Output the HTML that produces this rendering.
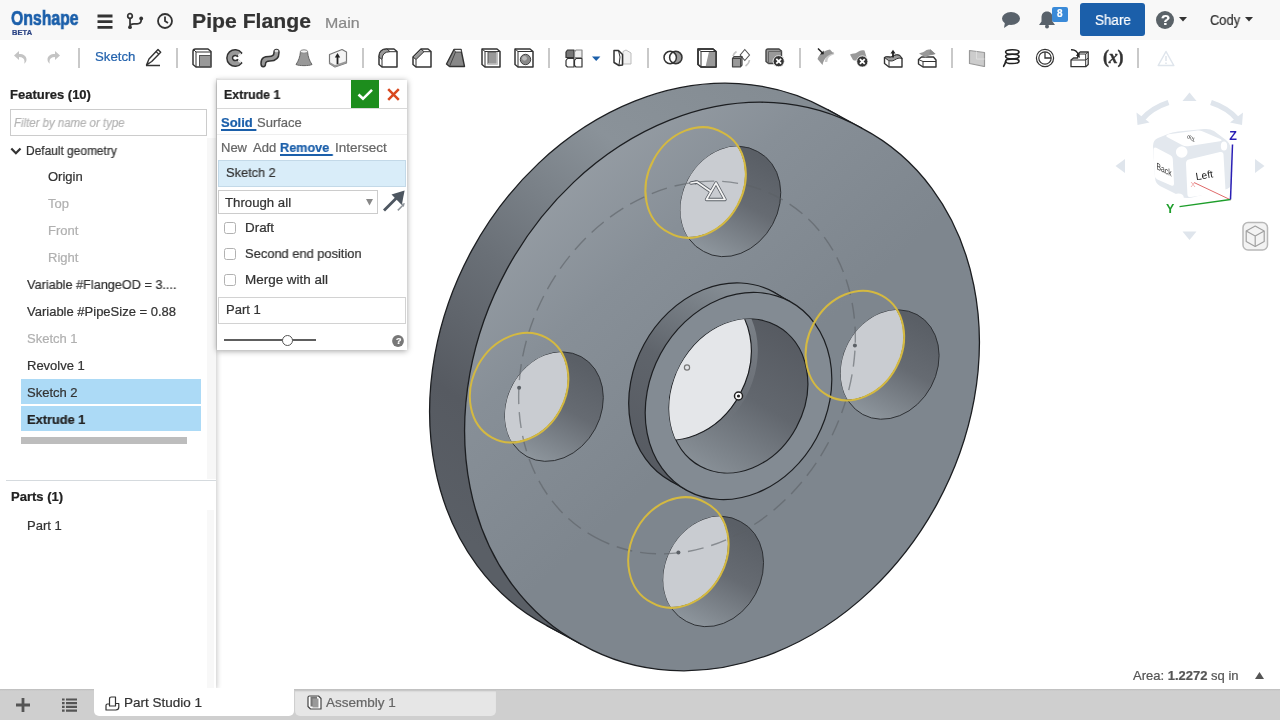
<!DOCTYPE html>
<html lang="en"><head><meta charset="utf-8"><title>Pipe Flange</title>
<style>
*{box-sizing:border-box;margin:0;padding:0}
html,body{width:1280px;height:720px;overflow:hidden;background:#fff;font-family:"Liberation Sans",sans-serif;color:#333}
.abs{position:absolute}
#hdr{position:absolute;left:0;top:0;width:1280px;height:40px;background:#f8f8f8}
#tb{position:absolute;left:0;top:40px;width:1280px;height:38px;background:#fff}
.t{position:absolute;white-space:nowrap;line-height:1;transform-origin:0 0;will-change:transform;-webkit-text-stroke:.22px}
#model{position:absolute;left:0;top:0}
#left{position:absolute;left:0;top:78px;width:216px;height:611px;background:#fff;box-shadow:1px 0 5px rgba(0,0,0,.22);clip-path:inset(0 -12px 0 0)}
#lstrip{position:absolute;left:206px;top:0;width:10px;height:611px;background:#f7f7f7}
#dlg{position:absolute;left:217px;top:80px;width:190px;height:270px;background:#fff;box-shadow:0 1px 6px rgba(0,0,0,.38)}
#bot{position:absolute;left:0;top:689px;width:1280px;height:31px;background:#cfcfcf}
.sep{position:absolute;top:46px;width:2px;height:22px;background:#c4c4c4}
.row{position:absolute;left:21px;width:180px;height:24px;background:#acdaf6}
.cb{position:absolute;left:7.200px;width:11.500px;height:11.500px;border:1px solid #b2b2b2;border-radius:2.500px;background:#fff}
</style></head><body>
<svg id="model" width="1280" height="720" viewBox="0 0 1280 720">
<defs>
<linearGradient id="gRim" gradientUnits="userSpaceOnUse" x1="760" y1="80" x2="440" y2="520">
<stop offset="0" stop-color="#848c93"/><stop offset="0.25" stop-color="#8a9299"/><stop offset="0.55" stop-color="#6a7077"/><stop offset="0.8" stop-color="#565a61"/><stop offset="1" stop-color="#5a5f66"/></linearGradient>
<linearGradient id="gFace" gradientUnits="userSpaceOnUse" x1="510" y1="190" x2="720" y2="420">
<stop offset="0" stop-color="#989fa6"/><stop offset="0.45" stop-color="#878f97"/><stop offset="1" stop-color="#7e868e"/></linearGradient>
<linearGradient id="gHubSide" gradientUnits="userSpaceOnUse" x1="730" y1="290" x2="640" y2="470">
<stop offset="0" stop-color="#848c93"/><stop offset="0.45" stop-color="#5f646b"/><stop offset="1" stop-color="#565a61"/></linearGradient>
<linearGradient id="gBand" gradientUnits="userSpaceOnUse" x1="750" y1="320" x2="730" y2="430"><stop offset="0" stop-color="#7b8188"/><stop offset="0.6" stop-color="#70757c" stop-opacity="0.8"/><stop offset="1" stop-color="#70757c" stop-opacity="0"/></linearGradient>
<linearGradient id="gBore" gradientUnits="userSpaceOnUse" x1="790" y1="330" x2="700" y2="480">
<stop offset="0" stop-color="#565a61"/><stop offset="0.45" stop-color="#62676e"/><stop offset="1" stop-color="#8d959c"/></linearGradient>

<linearGradient id="gH0" gradientUnits="userSpaceOnUse" x1="766" y1="161" x2="716" y2="256"><stop offset="0" stop-color="#5a5f66"/><stop offset="0.45" stop-color="#666b72"/><stop offset="1" stop-color="#8d959c"/></linearGradient>
<clipPath id="cH0"><path d="M703.5,251.4 A56.8,46.7 118.5 1 0 757.7,151.6 A56.8,46.7 118.5 1 0 703.5,251.4 Z" /></clipPath>
<linearGradient id="gH1" gradientUnits="userSpaceOnUse" x1="925" y1="325" x2="875" y2="420"><stop offset="0" stop-color="#5a5f66"/><stop offset="0.45" stop-color="#666b72"/><stop offset="1" stop-color="#8d959c"/></linearGradient>
<clipPath id="cH1"><path d="M862.8,414.5 A56.8,46.7 118.5 1 0 917.0,314.6 A56.8,46.7 118.5 1 0 862.8,414.5 Z" /></clipPath>
<linearGradient id="gH2" gradientUnits="userSpaceOnUse" x1="748" y1="532" x2="698" y2="627"><stop offset="0" stop-color="#5a5f66"/><stop offset="0.45" stop-color="#666b72"/><stop offset="1" stop-color="#8d959c"/></linearGradient>
<clipPath id="cH2"><path d="M686.3,621.4 A56.8,46.7 118.5 1 0 740.5,521.6 A56.8,46.7 118.5 1 0 686.3,621.4 Z" /></clipPath>
<linearGradient id="gH3" gradientUnits="userSpaceOnUse" x1="589" y1="367" x2="539" y2="462"><stop offset="0" stop-color="#5a5f66"/><stop offset="0.45" stop-color="#666b72"/><stop offset="1" stop-color="#8d959c"/></linearGradient>
<clipPath id="cH3"><path d="M527.0,456.6 A56.8,46.7 118.5 1 0 581.2,356.7 A56.8,46.7 118.5 1 0 527.0,456.6 Z" /></clipPath>
<clipPath id="cBore"><path d="M700.3,466.3 A80.0,65.8 118.5 1 0 776.7,325.7 A80.0,65.8 118.5 1 0 700.3,466.3 Z" /></clipPath>
<clipPath id="cFace"><path d="M581.9,644.6 A293.7,241.7 118.5 1 0 862.1,128.4 A293.7,241.7 118.5 1 0 581.9,644.6 Z" /></clipPath>
</defs>
<g stroke="#1c1e21" stroke-width="1.3" stroke-linejoin="round">
<path d="M546.9,625.6 A293.7,241.7 118.5 1 0 827.1,109.4 A293.7,241.7 118.5 1 0 546.9,625.6 Z" fill="url(#gRim)"/>
<path d="M546.9,625.6 L581.9,644.6 L862.1,128.4 L827.1,109.4 Z" fill="url(#gRim)" stroke="none"/>
<path d="M546.9,625.6 L581.9,644.6 M827.1,109.4 L862.1,128.4" fill="none"/>
<path d="M581.9,644.6 A293.7,241.7 118.5 1 0 862.1,128.4 A293.7,241.7 118.5 1 0 581.9,644.6 Z" fill="url(#gFace)"/>
</g>
<g stroke="#1c1e21" stroke-width="1.2">
<path d="M670.7,481.1 A107.6,88.6 118.5 1 0 773.3,291.9 A107.6,88.6 118.5 1 0 670.7,481.1 Z" fill="url(#gHubSide)"/>
<path d="M670.7,481.1 L687.2,490.6 L789.8,301.4 L773.3,291.9 Z" fill="url(#gHubSide)" stroke="none"/>
<path d="M670.7,481.1 L687.2,490.6 M773.3,291.9 L789.8,301.4" fill="none"/>
<path d="M687.2,490.6 A107.6,88.6 118.5 1 0 789.8,301.4 A107.6,88.6 118.5 1 0 687.2,490.6 Z" fill="#838b93"/>
<path d="M700.3,466.3 A80.0,65.8 118.5 1 0 776.7,325.7 A80.0,65.8 118.5 1 0 700.3,466.3 Z" fill="url(#gBore)"/>
</g>
<g clip-path="url(#cBore)"><path d="M641.2,438.1 A85.5,70.4 118.5 1 0 722.8,287.9 A85.5,70.4 118.5 1 0 641.2,438.1 Z" fill="url(#gBand)"/><path d="M643.8,433.3 A80.0,65.8 118.5 1 0 720.2,292.7 A80.0,65.8 118.5 1 0 643.8,433.3 Z" fill="#e4e6e9" stroke="#1c1e21" stroke-width="1.2"/></g>
<path d="M703.5,251.4 A56.8,46.7 118.5 1 0 757.7,151.6 A56.8,46.7 118.5 1 0 703.5,251.4 Z" fill="url(#gH0)" stroke="#2e3135" stroke-width="1"/>
<g clip-path="url(#cH0)"><path d="M668.5,232.4 A56.8,46.7 118.5 1 0 722.7,132.6 A56.8,46.7 118.5 1 0 668.5,232.4 Z" fill="#c9ccd1" stroke="#33363a" stroke-width="1"/></g>
<path d="M862.8,414.5 A56.8,46.7 118.5 1 0 917.0,314.6 A56.8,46.7 118.5 1 0 862.8,414.5 Z" fill="url(#gH1)" stroke="#2e3135" stroke-width="1"/>
<g clip-path="url(#cH1)"><path d="M827.8,395.5 A56.8,46.7 118.5 1 0 882.0,295.6 A56.8,46.7 118.5 1 0 827.8,395.5 Z" fill="#c9ccd1" stroke="#33363a" stroke-width="1"/></g>
<path d="M686.3,621.4 A56.8,46.7 118.5 1 0 740.5,521.6 A56.8,46.7 118.5 1 0 686.3,621.4 Z" fill="url(#gH2)" stroke="#2e3135" stroke-width="1"/>
<g clip-path="url(#cH2)"><path d="M651.3,602.4 A56.8,46.7 118.5 1 0 705.5,502.6 A56.8,46.7 118.5 1 0 651.3,602.4 Z" fill="#c9ccd1" stroke="#33363a" stroke-width="1"/></g>
<path d="M527.0,456.6 A56.8,46.7 118.5 1 0 581.2,356.7 A56.8,46.7 118.5 1 0 527.0,456.6 Z" fill="url(#gH3)" stroke="#2e3135" stroke-width="1"/>
<g clip-path="url(#cH3)"><path d="M492.0,437.6 A56.8,46.7 118.5 1 0 546.2,337.7 A56.8,46.7 118.5 1 0 492.0,437.6 Z" fill="#c9ccd1" stroke="#33363a" stroke-width="1"/></g>
<path d="M594.9,537.1 A193.0,158.8 118.5 1 0 779.1,197.9 A193.0,158.8 118.5 1 0 594.9,537.1 Z" fill="none" stroke="#5b6066" stroke-width="1.4" stroke-dasharray="16 8" opacity="0.6"/>
<path d="M668.5,232.4 A56.8,46.7 118.5 1 0 722.7,132.6 A56.8,46.7 118.5 1 0 668.5,232.4 Z" fill="none" stroke="#d4b941" stroke-width="2"/>
<circle cx="695.6" cy="182.5" r="2" fill="#5b6066"/>
<path d="M827.8,395.5 A56.8,46.7 118.5 1 0 882.0,295.6 A56.8,46.7 118.5 1 0 827.8,395.5 Z" fill="none" stroke="#d4b941" stroke-width="2"/>
<circle cx="854.9" cy="345.5" r="2" fill="#5b6066"/>
<path d="M651.3,602.4 A56.8,46.7 118.5 1 0 705.5,502.6 A56.8,46.7 118.5 1 0 651.3,602.4 Z" fill="none" stroke="#d4b941" stroke-width="2"/>
<circle cx="678.4" cy="552.5" r="2" fill="#5b6066"/>
<path d="M492.0,437.6 A56.8,46.7 118.5 1 0 546.2,337.7 A56.8,46.7 118.5 1 0 492.0,437.6 Z" fill="none" stroke="#d4b941" stroke-width="2"/>
<circle cx="519.1" cy="387.7" r="2" fill="#5b6066"/>
<circle cx="687.0" cy="367.5" r="2.6" fill="#e4e6e9" stroke="#777" stroke-width="1.2"/>
<circle cx="738.5" cy="396.0" r="4" fill="#fff" stroke="#222" stroke-width="1.5"/><circle cx="738.5" cy="396.0" r="1.6" fill="#222"/>
<g fill="none" stroke-linejoin="round" stroke-linecap="round"><path d="M691,183 L697,182 L710,191 M716,183 L725,199.500 H706.500 Z" stroke="#5a5f66" stroke-width="3.400"/><path d="M691,183 L697,182 L710,191 M716,183 L725,199.500 H706.500 Z" stroke="#f4f4f4" stroke-width="1.700"/></g>
</svg>
<div id="hdr">
 <div class="t" style="left:11px;top:9px;font-size:19.500px;font-weight:bold;color:#1b5faa;-webkit-text-stroke:.7px #1b5faa;transform:scaleX(.81)">Onshape</div>
 <div class="t" style="left:12px;top:28.600px;font-size:7.500px;font-weight:bold;color:#2d4585;letter-spacing:.1px">BETA</div>
 <svg class="abs" style="left:97px;top:13.500px" width="16" height="16"><path d="M.5 2h15M.5 7.700h15M.5 13.400h15" stroke="#333" stroke-width="2.800"/></svg>
 <svg class="abs" style="left:126px;top:11px" width="18" height="19" fill="none" stroke="#333" stroke-width="1.700"><circle cx="4" cy="5" r="2.300"/><circle cx="4" cy="16.200" r="1.900" fill="#333" stroke="none"/><circle cx="15.200" cy="7.500" r="1.900" fill="#333" stroke="none"/><path d="M4 7.500v8M15.200 7.500v1.500q0 3.800-4 3.800H8q-4 0-4 3"/></svg>
 <svg class="abs" style="left:156px;top:11.800px" width="18" height="18" fill="none" stroke="#333" stroke-width="1.8"><circle cx="9" cy="9" r="7"/><path d="M9 4.5V9l3 2"/></svg>
 <div class="t" style="left:192px;top:10.900px;font-size:20px;font-weight:bold;color:#333;transform:scaleX(1.06)">Pipe Flange</div>
 <div class="t" style="left:325px;top:15.500px;font-size:14.500px;color:#888;transform:scaleX(1.1)">Main</div>
 <svg class="abs" style="left:1001px;top:11px" width="20" height="18"><ellipse cx="10" cy="7.5" rx="9" ry="6.5" fill="#59626b"/><path d="M4 11l-1 6 6-4z" fill="#59626b"/></svg>
 <svg class="abs" style="left:1037px;top:10px" width="20" height="20"><path d="M10 1.5c-3.6 0-5.5 2.6-5.5 6v4L2 15h16l-2.500-3.500v-4c0-3.400-1.900-6-5.500-6z" fill="#59626b"/><circle cx="10" cy="16.500" r="2" fill="#59626b"/></svg>
 <div class="abs" style="left:1052px;top:7px;width:16px;height:15px;background:#3a8ad8;border-radius:2px"></div>
 <div class="t" style="left:1057px;top:9px;font-size:10px;font-weight:bold;color:#fff">8</div>
 <div class="abs" style="left:1080px;top:3px;width:65px;height:33px;background:#1b5faa;border-radius:3px"></div>
 <div class="t" style="left:1094.500px;top:13px;font-size:14px;color:#fff;transform:scaleX(.96)">Share</div>
 <svg class="abs" style="left:1155px;top:10px" width="20" height="20"><circle cx="10" cy="10" r="9" fill="#5a6268"/></svg>
 <div class="t" style="left:1160.500px;top:12px;font-size:15px;font-weight:bold;color:#fff">?</div>
 <svg class="abs" style="left:1179px;top:17px" width="9" height="6"><path d="M0 0h8L4 4.500z" fill="#333"/></svg>
 <div class="t" style="left:1210px;top:13px;font-size:14px;color:#333;transform:scaleX(.92)">Cody</div>
 <svg class="abs" style="left:1244.500px;top:17px" width="9" height="6"><path d="M0 0h8L4 4.500z" fill="#333"/></svg>
</div>
<div id="tb">
<svg class="abs" style="left:13px;top:10px" width="15" height="15" viewBox="0 0 15 15" ><path d="M6 1L1 5.5l5 4.500V7c3.500 0 5.500 1.500 5.500 4.500 0 .8-.2 1.500-.5 2.200C13 12.500 13.500 11 13.500 9.500 13.500 6 10.500 4 6 4z" fill="#c4c4c4"/></svg>
<svg class="abs" style="left:46px;top:10px" width="15" height="15" viewBox="0 0 15 15" ><path transform="translate(15,0) scale(-1,1)" d="M6 1L1 5.5l5 4.500V7c3.500 0 5.500 1.500 5.500 4.500 0 .8-.2 1.500-.5 2.200C13 12.500 13.500 11 13.500 9.500 13.500 6 10.500 4 6 4z" fill="#c4c4c4"/></svg>
<div class="abs" style="left:78px;top:8px;width:2px;height:20px;background:#c9c9c9"></div>
<div class="t" style="left:95px;top:10px;font-size:13.200px;color:#2463ad">Sketch</div>
<svg class="abs" style="left:143px;top:7px" width="20" height="20" viewBox="0 0 20 20" ><path d="M3 18.500h14" stroke="#333" stroke-width="1.500"/><path d="M3.500 18l2.500-6L15 2.500l2.700 2.700L8.700 14.500z" fill="#fff" stroke="#333" stroke-width="1.400" stroke-linejoin="round"/><path d="M13 4.500l2.700 2.700" stroke="#333" stroke-width="1.200"/><path d="M3.500 18l1.200-3 1.800 1.800z" fill="#333"/></svg>
<div class="abs" style="left:176px;top:8px;width:2px;height:20px;background:#c9c9c9"></div>
<svg class="abs" style="left:192px;top:8px" width="20" height="20" viewBox="0 0 20 20" ><path d="M1 3.500Q1 1 3.500 1H16l3 2.500V19H4L1 16.500z" fill="#fff" stroke="#333" stroke-width="1.500" stroke-linejoin="round"/><path d="M4 4h15" stroke="#333" stroke-width="1"/><path d="M4 4v15" stroke="#333" stroke-width="1"/><path d="M1.500 1.500L4 4" stroke="#333" stroke-width="1"/><rect x="7.500" y="7.500" width="11" height="11" fill="#999" stroke="#555" stroke-width="1"/></svg>
<svg class="abs" style="left:226px;top:8px" width="19" height="20" viewBox="0 0 19 20" ><path d="M15.7 4.9A8.3 8.3 0 1 0 15.7 15.1L11.2 11.6A2.6 2.6 0 1 1 11.2 8.4Z" fill="#999" stroke="#333" stroke-width="1.500" stroke-linejoin="round"/><ellipse cx="13.5" cy="6.6" rx="1.900" ry="1" transform="rotate(-38 13.5 6.6)" fill="#eee"/><ellipse cx="13.5" cy="13.4" rx="1.900" ry="1" transform="rotate(38 13.5 13.4)" fill="#eee"/></svg>
<svg class="abs" style="left:259px;top:8px" width="21" height="20" viewBox="0 0 21 20" ><path d="M2 15.500C2 9 6 8.500 10 8.500c3.500 0 5-1 5-4 0-2 .8-3 2.500-3S20 2.500 20 4.500c0 6-4 8.500-9 8.500-3 0-4.500.5-4.500 3 0 1.800-1 2.700-2.300 2.700S2 17.500 2 15.500z" fill="#999" stroke="#333" stroke-width="1.500"/><ellipse cx="17.500" cy="3" rx="2" ry="1.200" fill="#ddd"/></svg>
<svg class="abs" style="left:294px;top:8px" width="20" height="20" viewBox="0 0 20 20" ><path d="M6.500 3.500C6 9 4.500 13 2 16.500c3 1.500 13 1.500 16 0C15.500 13 14 9 13.500 3.500z" fill="#999" stroke="#666" stroke-width="1"/><ellipse cx="10" cy="3.500" rx="3.600" ry="1.700" fill="#f4f4f4" stroke="#888" stroke-width="1"/></svg>
<svg class="abs" style="left:328px;top:8px" width="20" height="20" viewBox="0 0 20 20" ><path d="M1.500 6.500L14 1.500l4.500 2.500v11L7 19l-5.500-3.500z" fill="#f4f4f4" stroke="#777" stroke-width="1.200" stroke-linejoin="round"/><path d="M1.500 14l5.500 3 11.500-4v2L7 19l-5.500-3z" fill="#999"/><path d="M9.500 16V8" stroke="#222" stroke-width="1.800"/><path d="M6.800 9.500L9.500 5l2.700 4.500z" fill="#222"/></svg>
<div class="abs" style="left:362px;top:8px;width:2px;height:20px;background:#c9c9c9"></div>
<svg class="abs" style="left:378px;top:8px" width="20" height="20" viewBox="0 0 20 20" ><path d="M1 9Q1 1 9 1h7l3 2.500V19H4L1 16.500z" fill="#fff" stroke="#333" stroke-width="1.500" stroke-linejoin="round"/><path d="M1 9Q1 1 9 1l3 2.700Q4 3.700 4 11.500z" fill="#999" stroke="#333" stroke-width="1"/><path d="M12 3.700h7M4 11.500V19" stroke="#333" stroke-width="1" fill="none"/></svg>
<svg class="abs" style="left:412px;top:8px" width="20" height="20" viewBox="0 0 20 20" ><path d="M1 9L9 1h7l3 2.500V19H4L1 16.500z" fill="#fff" stroke="#333" stroke-width="1.500" stroke-linejoin="round"/><path d="M1 9L9 1l3 2.700-8 7.800z" fill="#999" stroke="#333" stroke-width="1"/><path d="M12 3.700h7M4 11.500V19" stroke="#333" stroke-width="1" fill="none"/></svg>
<svg class="abs" style="left:445px;top:8px" width="21" height="20" viewBox="0 0 21 20" ><path d="M9 1.500h7l3.500 17H4.500L1.500 16z" fill="#888" stroke="#333" stroke-width="1.400" stroke-linejoin="round"/><path d="M9 1.500h7l.6 2.500h-6z" fill="#f4f4f4" stroke="#333" stroke-width=".8"/><path d="M10.500 4L4.500 18.500" stroke="#444" stroke-width="1"/></svg>
<svg class="abs" style="left:481px;top:8px" width="20" height="20" viewBox="0 0 20 20" ><path d="M1 1h15l3 2.500V19H4L1 16.500z" fill="#fff" stroke="#333" stroke-width="1.500" stroke-linejoin="round"/><path d="M1 1l3 2.500H19M4 3.500V19" stroke="#333" stroke-width="1" fill="none"/><rect x="7" y="4" width="9" height="12" fill="#999" stroke="#555" stroke-width="1"/><path d="M7 16h9V4" fill="none" stroke="#ccc" stroke-width="1.500"/></svg>
<svg class="abs" style="left:514px;top:8px" width="20" height="20" viewBox="0 0 20 20" ><path d="M1 1h15l3 2.500V19H4L1 16.500z" fill="#fff" stroke="#333" stroke-width="1.500" stroke-linejoin="round"/><path d="M1 1l3 2.500H19M4 3.500V19" stroke="#333" stroke-width="1" fill="none"/><circle cx="11.500" cy="11.500" r="5.200" fill="#888" stroke="#444" stroke-width="1"/><circle cx="10.500" cy="10.300" r="2.400" fill="#bbb"/></svg>
<div class="abs" style="left:548px;top:8px;width:2px;height:20px;background:#c9c9c9"></div>
<svg class="abs" style="left:565px;top:9px" width="18" height="19" viewBox="0 0 18 19" ><g stroke="#333" stroke-width="1.200" stroke-linejoin="round"><path d="M1 3l1.500-2h6.500v7.500H1z" fill="#777"/><path d="M9.500 3l1.500-2h6v7.500H9.500z" fill="#eee" stroke="#888"/><path d="M1 11.500l1.500-2h6.500V18H2.500L1 16.500z" fill="#fff"/><path d="M9.500 11.500l1.500-2h6V18h-6l-1.500-1.500z" fill="#fff"/></g></svg>
<svg class="abs" style="left:592px;top:16px" width="9" height="6" viewBox="0 0 9 6" ><path d="M0 .5h8.400L4.200 5z" fill="#1b5faa"/></svg>
<svg class="abs" style="left:612px;top:8px" width="21" height="20" viewBox="0 0 21 20" ><path d="M11 3.500l3-1.500 5 3v11h-8z" fill="#f2f2f2" stroke="#bbb" stroke-width="1"/><path d="M2 2.500h4.500l4 4V17l-3.500.5-5-3z" fill="#fff" stroke="#333" stroke-width="1.500" stroke-linejoin="round"/><path d="M6.500 2.500L8 9l-1 8" fill="none" stroke="#333" stroke-width="1"/></svg>
<div class="abs" style="left:647px;top:8px;width:2px;height:20px;background:#c9c9c9"></div>
<svg class="abs" style="left:663px;top:10px" width="20" height="15" viewBox="0 0 20 15" ><path d="M10 1.970A6.200 6.200 0 1 1 10 13.030A6.200 6.200 0 0 0 10 1.970z" fill="#999"/><circle cx="7.200" cy="7.500" r="6.200" fill="none" stroke="#333" stroke-width="1.500"/><circle cx="12.800" cy="7.500" r="6.200" fill="none" stroke="#333" stroke-width="1.500"/></svg>
<svg class="abs" style="left:697px;top:8px" width="20" height="20" viewBox="0 0 20 20" ><path d="M1 1h15l3 2.500V19H4L1 16.500z" fill="#fff" stroke="#333" stroke-width="1.500" stroke-linejoin="round"/><path d="M12 3.500h7V19H8.500z" fill="#999"/><path d="M1 1l3 2.500H19M4 3.500V19" stroke="#333" stroke-width="1" fill="none"/><path d="M1 1h15l3 2.500V19H4L1 16.500z" fill="none" stroke="#333" stroke-width="1.500" stroke-linejoin="round"/></svg>
<svg class="abs" style="left:731px;top:8px" width="20" height="20" viewBox="0 0 20 20" ><path d="M5.500 3.500A8.500 8.500 0 0 0 2 8" fill="none" stroke="#c4c4c4" stroke-width="1.600"/><path d="M14.500 18A8.500 8.500 0 0 0 18.500 12" fill="none" stroke="#c4c4c4" stroke-width="1.600"/><path d="M13.800 1.500l4.700 5.500-4.700 5.500L9.200 7z" fill="#fff" stroke="#555" stroke-width="1.100"/><path d="M1.500 10.500l1.500-1.800h8V17l-1.500 1.800h-8z" fill="#999" stroke="#444" stroke-width="1.200" stroke-linejoin="round"/><path d="M1.500 10.500h8v8.300M9.500 10.500L11 8.700" fill="none" stroke="#444" stroke-width="1"/></svg>
<svg class="abs" style="left:765px;top:8px" width="20" height="20" viewBox="0 0 20 20" ><path d="M1 3Q1 1 3 1h11l2.500 2v12.500H3.500L1 13.500z" fill="#999" stroke="#444" stroke-width="1.400" stroke-linejoin="round"/><path d="M3.500 3.500v12M3.500 3.500h13" stroke="#666" stroke-width="1"/><circle cx="13.700" cy="13.200" r="5.600" fill="#333" stroke="#fff" stroke-width=".8"/><path d="M11.300 10.800l4.800 4.800M16.100 10.800l-4.800 4.800" stroke="#fff" stroke-width="1.800"/></svg>
<div class="abs" style="left:799px;top:8px;width:2px;height:20px;background:#c9c9c9"></div>
<svg class="abs" style="left:815px;top:7px" width="21" height="21" viewBox="0 0 21 21" ><path d="M11 15c0-5 4-8 8-9" fill="none" stroke="#ccc" stroke-width="2.500"/><path d="M2.500 12C4 7 9 3.500 15 2.500l3.500 4C13 7.500 9 11 7.500 18z" fill="#999"/><path d="M3 1.500l4.500 4.500" stroke="#222" stroke-width="1.500"/><path d="M5 7.500l3.800-.2-.2-3.800z" fill="#222"/></svg>
<svg class="abs" style="left:849px;top:8px" width="20" height="20" viewBox="0 0 20 20" ><path d="M1 6.500c3-1.500 5-.5 7-2s4.500-3 7.500-2L17.500 9c-3-1-5 .5-7 2s-4 2-6.500 1z" fill="#999"/><circle cx="13.300" cy="13.500" r="5.600" fill="#333" stroke="#fff" stroke-width=".8"/><path d="M10.900 11.100l4.800 4.800M15.700 11.100l-4.800 4.800" stroke="#fff" stroke-width="1.800"/></svg>
<svg class="abs" style="left:883px;top:9px" width="20" height="19" viewBox="0 0 20 19" ><path d="M1.500 8.500c3-2 5 1 8-1s5-2 7-1l2.500 3V18h-13L1.500 14.500z" fill="#fff" stroke="#333" stroke-width="1.400" stroke-linejoin="round"/><path d="M1.500 8.500c3-2 5 1 8-1s5-2 7-1l2.500 3c-3-1-5 0-7.500 1.500s-4 1-6 .5z" fill="#999" stroke="#333" stroke-width="1"/><path d="M6 12v6" stroke="#333" stroke-width="1"/><path d="M10 8.500V3" stroke="#222" stroke-width="1.800"/><path d="M7.500 4.500L10 .8l2.500 3.700z" fill="#222"/></svg>
<svg class="abs" style="left:917px;top:8px" width="20" height="20" viewBox="0 0 20 20" ><path d="M1.500 11.500l3-2.500h12l2.500 3V19h-13L1.500 16z" fill="#fff" stroke="#333" stroke-width="1.400" stroke-linejoin="round"/><path d="M1.500 11.500l4.500 2h13M6 13.500V19" fill="none" stroke="#333" stroke-width="1"/><path d="M2 5.500c3-1 5-1.500 7.500-3.500 2-1 4-.5 5 .5L18.500 6l-3 1c-3 0-5 1-7 2.500z" fill="#999"/><path d="M13 1l5.500 5-6 .5z" fill="#888"/></svg>
<div class="abs" style="left:951px;top:8px;width:2px;height:20px;background:#c9c9c9"></div>
<svg class="abs" style="left:968px;top:9px" width="18" height="18" viewBox="0 0 18 18" ><path d="M1.500 1.500L16.500 3.500V17.500L1.500 14.500z" fill="#ccc" stroke="#999" stroke-width="1.200" stroke-linejoin="round"/><path d="M8.500 2.500v7.500M8.500 10h8" stroke="#ddd" stroke-width="1"/></svg>
<svg class="abs" style="left:1002px;top:8px" width="19" height="20" viewBox="0 0 19 20" ><g fill="none" stroke="#222" stroke-width="1.600" stroke-linecap="round"><ellipse cx="10.300" cy="4" rx="6.700" ry="2.300"/><ellipse cx="10.300" cy="8.600" rx="6.700" ry="2.300"/><ellipse cx="10.300" cy="13.200" rx="6.700" ry="2.300"/><path d="M3.600 13.500c-.3 1.800-1 3.300-2 4.800"/></g></svg>
<svg class="abs" style="left:1035px;top:8px" width="20" height="20" viewBox="0 0 20 20" ><circle cx="10" cy="10" r="8.600" fill="none" stroke="#333" stroke-width="1.200"/><circle cx="10" cy="10" r="6.200" fill="none" stroke="#333" stroke-width="1.200"/><path d="M10 4v6h6" fill="none" stroke="#333" stroke-width="1.300"/></svg>
<svg class="abs" style="left:1069px;top:8px" width="21" height="20" viewBox="0 0 21 20" ><path d="M2 12l2.500-2h4.200V6l2.500-2h8v12.500l-2.500 2.200H2z" fill="#fff" stroke="#333" stroke-width="1.300" stroke-linejoin="round"/><path d="M2 12h14.700v6.700M16.700 12l2.500-2M8.700 6h8v6M16.700 6l2.500-2" fill="none" stroke="#333" stroke-width="1"/><path d="M2 1.800c4-.3 6.500 2 7.500 5.500" fill="none" stroke="#222" stroke-width="1.300"/><path d="M6.800 7.200l4 2.800-.3-5z" fill="#222"/></svg>
<div class="t" style="left:1103px;top:8px;font-family:'Liberation Serif',serif;font-size:18px;font-weight:bold;color:#333;letter-spacing:-.3px;-webkit-text-stroke:.35px #333">(<i>x</i>)</div>
<div class="abs" style="left:1137px;top:8px;width:2px;height:20px;background:#c9c9c9"></div>
<svg class="abs" style="left:1157px;top:10px" width="18" height="17" viewBox="0 0 18 17" ><path d="M9 1.500L16.800 15.500H1.200z" fill="none" stroke="#dfe5ec" stroke-width="1.500" stroke-linejoin="round"/><path d="M9 6v5M9 12.500v1.500" stroke="#dfe5ec" stroke-width="1.500"/></svg>
</div>
<div id="left">
 <div class="abs" style="left:206.500px;top:60px;width:9.500px;height:341px;background:#f7f7f7"></div><div class="abs" style="left:206.500px;top:432px;width:7px;height:179px;background:#f8f8f8"></div>
 <div class="t" style="left:10px;top:9.9px;font-size:13px;color:#222;font-weight:bold">Features (10)</div>
 <div class="abs" style="left:10px;top:31px;width:197px;height:27px;border:1px solid #ccc;background:#fff"></div>
 <div class="t" style="left:14px;top:38.8px;font-size:12px;color:#b5b5b5;font-style:italic;transform:scaleX(0.953)">Filter by name or type</div>
 <svg class="abs" style="left:10px;top:68.500px" width="12" height="9" fill="none" stroke="#333" stroke-width="2.200"><path d="M1.300 1.600l4.600 4.700 4.600-4.700"/></svg>
 <div class="t" style="left:25.7px;top:66.9px;font-size:12px;color:#333;transform:scaleX(0.993)">Default geometry</div>
 <div class="t" style="left:47.5px;top:91.6px;font-size:13px;color:#333">Origin</div>
 <div class="t" style="left:47.5px;top:118.6px;font-size:13px;color:#b0b0b0">Top</div>
 <div class="t" style="left:47.5px;top:145.6px;font-size:13px;color:#b0b0b0">Front</div>
 <div class="t" style="left:47.5px;top:172.6px;font-size:13px;color:#b0b0b0">Right</div>
 <div class="t" style="left:27.3px;top:199.6px;font-size:13px;color:#333;transform:scaleX(0.975)">Variable #FlangeOD = 3....</div>
 <div class="t" style="left:27.3px;top:226.6px;font-size:13px;color:#333">Variable #PipeSize = 0.88</div>
 <div class="t" style="left:27.3px;top:253.6px;font-size:13px;color:#b0b0b0">Sketch 1</div>
 <div class="t" style="left:27.3px;top:280.6px;font-size:13px;color:#333">Revolve 1</div>
 <div class="row" style="top:301.400px;height:24.300px"></div>
 <div class="t" style="left:27.3px;top:307.6px;font-size:13px;color:#333">Sketch 2</div>
 <div class="row" style="top:328.300px;height:24.300px"></div>
 <div class="t" style="left:27.3px;top:334.6px;font-size:13px;color:#222;font-weight:bold;transform:scaleX(0.985)">Extrude 1</div>
 <div class="abs" style="left:21px;top:359.300px;width:165.700px;height:6.600px;background:#bdbdbd"></div>
 <div class="abs" style="left:6px;top:401.500px;width:210px;height:1px;background:#d5dade"></div>
 <div class="t" style="left:10.5px;top:411.8px;font-size:13px;color:#222;font-weight:bold">Parts (1)</div>
 <div class="t" style="left:27.3px;top:441.4px;font-size:13px;color:#333">Part 1</div>
</div>
<div id="dlg">
 <div class="t" style="left:6.8px;top:8.6px;font-size:12.5px;color:#222;font-weight:bold;transform:scaleX(0.99)">Extrude 1</div>
 <div class="abs" style="left:134px;top:0;width:28px;height:28px;background:#1d8d1d"></div>
 <svg class="abs" style="left:139.500px;top:7.500px" width="17" height="13" fill="none" stroke="#fff" stroke-width="2.600"><path d="M1.500 6.500l4.500 4.300L15 1.800"/></svg>
 <svg class="abs" style="left:169.500px;top:8px" width="13" height="13" fill="none" stroke="#d9481f" stroke-width="2.500"><path d="M1.200 1.200l10.600 10.600M11.800 1.200L1.200 11.800"/></svg>
 <div class="abs" style="left:0;top:28px;width:190px;height:1px;background:#d8d8d8"></div>
 <div class="t" style="left:4px;top:36.0px;font-size:13px;color:#1b5faa;font-weight:bold;text-decoration:underline;text-decoration-thickness:1.500px;text-underline-offset:1.500px">Solid&nbsp;</div>
 <div class="t" style="left:40.30000000000001px;top:36.0px;font-size:13px;color:#666">Surface</div>
 <div class="abs" style="left:0;top:54px;width:190px;height:1px;background:#efefef"></div>
 <div class="t" style="left:4px;top:60.5px;font-size:13px;color:#666">New</div>
 <div class="t" style="left:35.5px;top:60.5px;font-size:13px;color:#666">Add</div>
 <div class="t" style="left:63.19999999999999px;top:60.5px;font-size:13px;color:#1b5faa;font-weight:bold;transform:scaleX(0.975);text-decoration:underline;text-decoration-thickness:1.500px;text-underline-offset:1.500px">Remove&nbsp;</div>
 <div class="t" style="left:118.19999999999999px;top:60.5px;font-size:13px;color:#666;transform:scaleX(1.037)">Intersect</div>
 <div class="abs" style="left:1px;top:80.200px;width:188px;height:27.300px;background:#d9edf9;border:1px solid #c3d9e8"></div>
 <div class="t" style="left:9.300000000000011px;top:85.8px;font-size:13px;color:#333;transform:scaleX(0.985)">Sketch 2</div>
 <div class="abs" style="left:1px;top:110.400px;width:159.600px;height:23.200px;border:1px solid #ccc;background:#fff"></div>
 <div class="t" style="left:8.300000000000011px;top:115.7px;font-size:13px;color:#333;transform:scaleX(1.016)">Through all</div>
 <svg class="abs" style="left:148.500px;top:119px" width="8" height="7"><path d="M0 0h7L3.500 6.400z" fill="#888"/></svg>
 <svg class="abs" style="left:165px;top:110px" width="24" height="24"><path d="M2 20.500L14.500 8" stroke="#4d5660" stroke-width="2.800"/><path d="M9.500 4.500L22.600.4 19.800 15z" fill="#4d5660"/><path d="M15.800 20.400l5.400-5.400" stroke="#8e949a" stroke-width="1.500"/><path d="M18.800 14l4-1-1 4z" fill="#8e949a"/></svg>
 <div class="cb" style="top:142.0px"></div>
 <div class="t" style="left:28px;top:140.8px;font-size:13px;color:#333;transform:scaleX(1.03)">Draft</div>
 <div class="cb" style="top:168.0px"></div>
 <div class="t" style="left:28px;top:167.0px;font-size:13px;color:#333;transform:scaleX(0.99)">Second end position</div>
 <div class="cb" style="top:194.2px"></div>
 <div class="t" style="left:28px;top:192.9px;font-size:13px;color:#333;transform:scaleX(1.034)">Merge with all</div>
 <div class="abs" style="left:1px;top:216.800px;width:187.500px;height:27.600px;border:1px solid #d2d2d2;background:#fff"></div>
 <div class="t" style="left:9.300000000000011px;top:223.0px;font-size:13px;color:#333">Part 1</div>
 <div class="abs" style="left:7.200px;top:259.100px;width:91.800px;height:1.800px;background:#5e5e5e"></div>
 <div class="abs" style="left:64.900px;top:254.800px;width:11px;height:11px;border-radius:6px;border:1.300px solid #555;background:#fff"></div>
 <svg class="abs" style="left:174px;top:254.200px" width="14" height="14"><circle cx="7" cy="7" r="5.900" fill="#777"/></svg>
 <div class="t" style="left:178.600px;top:256.700px;font-size:9px;font-weight:bold;color:#fff">?</div>
</div>
<svg class="abs" style="left:1100px;top:80px;will-change:transform" width="180" height="180" viewBox="1100 80 180 180" font-family="Liberation Sans, sans-serif">
<g fill="#dfe5ec">
<path d="M1182.500 101l7-8.500 7 8.500z"/>
<path d="M1182.500 231.500l7 8.500 7-8.500z"/>
<path d="M1125 159l-9.500 7 9.500 7z"/>
<path d="M1255 159l9.500 7-9.500 7z"/>
</g>
<g fill="none" stroke="#dfe5ec" stroke-width="5.500">
<path d="M1168.500 102.500q-17 5.500-26.500 17"/>
<path d="M1211 102.500q17 5.500 26.500 17"/>
</g>
<path d="M1136.500 112.500l1 12.500 12-2.500z" fill="#dfe5ec"/>
<path d="M1243 112.500l-1 12.500-12-2.500z" fill="#dfe5ec"/>
<!-- cube body -->
<path d="M1153 146q0-6 5-8l10-4q4-2 10-2.500l26-2.500q6-.5 10 2l12 9q4 3 4.500 8l1.500 34q0 5-5 7l-35 8.500q-6 1.500-11-1l-21-10.500q-4.500-2.500-5-8z" fill="#e3e8ee"/>
<!-- faces -->
<path d="M1168.500 134.200l29-3.600q2.500-.3 4.800.7l18 7.800q3 1.500-.3 2.200l-32 4.900q-3 .4-5.500-.9l-15-8q-3-1.800 1-3.100z" fill="#fff"/>
<path d="M1156.200 147.800l14.300 7.400q2.200 1.300 2.300 3.800l1.200 24.500q.1 3.300-2.800 2l-13.800-6q-2.500-1.200-2.700-3.800l-1.200-25.700q-.1-3.600 2.700-2.200z" fill="#fff"/>
<path d="M1188.800 159.600l31.200-7.600q3.300-.7 3.500 2.600l1.900 34q.2 3.300-3 3.800l-31.500 4.700q-3.300.5-3.500-2.800l-1.400-30.500q-.2-3.400 2.800-4.200z" fill="#fff"/>
<circle cx="1181.700" cy="152" r="5.800" fill="#fff"/>
<ellipse cx="1178.500" cy="197" rx="5.200" ry="3.600" fill="#fff"/>
<ellipse cx="1224" cy="146" rx="3.200" ry="4.500" fill="#fff"/>
<!-- labels -->
<text font-size="9.500" fill="#333" text-anchor="middle" textLength="15" lengthAdjust="spacingAndGlyphs" transform="translate(1164 172.800) skewY(27)">Back</text>
<text x="1204.300" y="178.800" font-size="10.500" fill="#222" text-anchor="middle" transform="rotate(-9 1204.300 175.500)">Left</text>
<text x="1191" y="140.500" font-size="5.500" fill="#333" text-anchor="middle" transform="rotate(200 1191 138.500)">Top</text>
<!-- axes -->
<path d="M1230.500 199.800L1194 182.500" stroke="#e06a6a" stroke-width="1"/>
<text x="1190.500" y="186.500" font-size="7.500" fill="#ee9c9c">X</text>
<path d="M1230.500 199.500L1179.500 206.700" stroke="#1e9e2b" stroke-width="1.300"/>
<path d="M1230.500 199.500L1232.500 144.500" stroke="#2a1fb5" stroke-width="1.500"/>
<text x="1229.300" y="139.600" font-size="12.500" font-weight="bold" fill="#2a1fb5">Z</text>
<text x="1166" y="213" font-size="12.500" font-weight="bold" fill="#1e9e2b">Y</text>
<!-- iso button -->
<rect x="1243" y="222.500" width="24.500" height="27.500" rx="5" fill="#f3f3f3" stroke="#b8b8b8" stroke-width="1.500"/>
<g fill="none" stroke="#a0a0a0" stroke-width="1.200" stroke-linejoin="round"><path d="M1255.200 226l9 5v10.500l-9 5-9-5V231z"/><path d="M1246.200 231l9 5 9-5M1255.200 236v10.500"/></g>
</svg>

<div class="t" style="left:1133px;top:669px;font-size:13px;color:#555">Area: <b>1.2272</b> sq in</div>
<svg class="abs" style="left:1255px;top:672px" width="10" height="8"><path d="M0 7h9L4.500 0z" fill="#555"/></svg>
<div id="bot">
 <div class="abs" style="left:0;top:0;width:1280px;height:2px;background:linear-gradient(#bdbdbd,#cfcfcf)"></div>
 <svg class="abs" style="left:16px;top:9px" width="14" height="14"><path d="M7 0v14M0 7h14" stroke="#555" stroke-width="2.800"/></svg>
 <svg class="abs" style="left:62px;top:9px" width="15" height="14"><path d="M4 1.500h11M4 5.200h11M4 8.900h11M4 12.600h11" stroke="#555" stroke-width="2.200"/><path d="M0 1.500h2.600M0 5.200h2.600M0 8.900h2.600M0 12.600h2.600" stroke="#555" stroke-width="2.200"/></svg>
 <div class="abs" style="left:94px;top:-1px;width:199.500px;height:28.200px;background:#fff;border-radius:0 0 5px 5px"></div>
 <svg class="abs" style="left:105px;top:6.500px" width="15" height="15" fill="none" stroke="#333" stroke-width="1.200" stroke-linejoin="round"><path d="M4.500 3Q4.500 1 6.500 1H10.500V7.500H13.800V11Q13.800 14 10.800 14H1V9.500Q1 8 2.500 8H4.500z"/><path d="M4.500 8V10H10.500V7.500" /></svg>
 <div class="t" style="left:123.500px;top:7px;font-size:13.500px;color:#333">Part Studio 1</div>
 <div class="abs" style="left:295px;top:1px;width:201px;height:25.500px;background:#e6e6e6;border-radius:0 0 5px 5px;box-shadow:inset 0 2px 2px -1px rgba(0,0,0,.18)"></div>
 <svg class="abs" style="left:306.500px;top:6px" width="15" height="15" stroke-linejoin="round"><path d="M1 2.500Q1 1 2.500 1H11.500L14 3.500V14H3.500L1 11.500z" fill="#fff" stroke="#444" stroke-width="1.200"/><path d="M3.500 1.500h6.500v10H3.500z" fill="#777"/><path d="M5.500 3.500h6v9h-6z" fill="#999"/></svg>
 <div class="t" style="left:325.500px;top:7px;font-size:13.500px;color:#666">Assembly 1</div>
</div>
</body></html>
